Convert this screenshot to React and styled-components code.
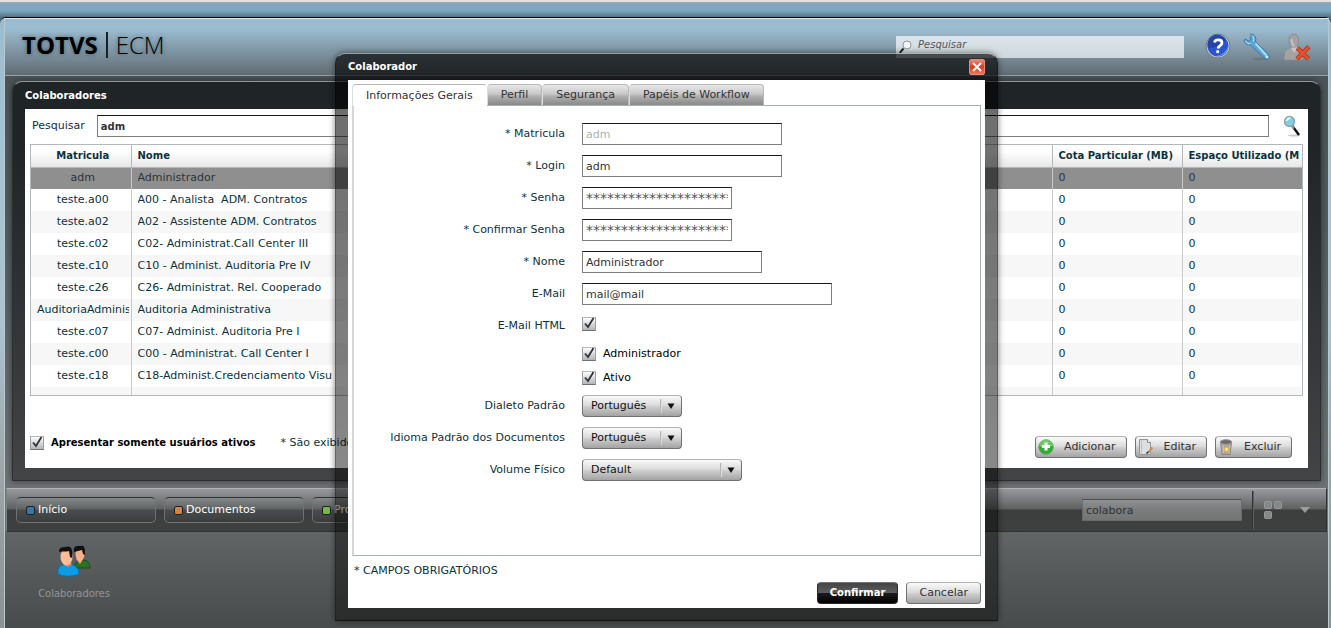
import React, { useState } from "react";
import styled, { createGlobalStyle, css } from "styled-components";

const GlobalStyle = createGlobalStyle`
    * {
        box-sizing: border-box;
    }

    body {
        margin: 0;
        background: #80a8c0;
        color: #0b333c;
        font-family: "DejaVu Sans", Verdana, sans-serif;
        font-size: 11px;
        line-height: 14px;
    }

    button,
    input,
    select {
        font: inherit;
        margin: 0;
    }
`;

const Page = styled.div`
    position: relative;
    display: flex;
    flex-direction: column;
    min-height: 100vh;
    overflow: hidden;
    border-top: 2px solid #e2e2e2;
    background: linear-gradient(#80a8c0 0, #7fa6bd 9px, #55707f 15px);
`;

const TopLine = styled.div`
    height: 1px;
    background: #a3a7a9;
`;

const Frame = styled.div`
    display: flex;
    flex: 1;
    flex-direction: column;
    margin-top: 14px;
    padding: 0 2px 0 4px;
    border-top: 1px solid #000;
    border-radius: 6px 6px 0 0;
    background: linear-gradient(#9bbcd0, #a4c3d2 20%, #abc4d0 50%, #9fa4a7 75%, #8d9193);
`;

const Inner = styled.div`
    display: flex;
    flex: 1;
    flex-direction: column;
    border: 1px solid #b9c9d0;
    border-top-color: #dbe8ee;
    border-bottom: 0;
    background: linear-gradient(#4b5558 60px, #525b5e 200px, #6e7274 470px);
`;

const Header = styled.header`
    display: flex;
    align-items: center;
    height: 57px;
    padding: 0 17px;
    border-bottom: 1px solid #98a2a8;
    background: linear-gradient(#9bbcd0 10px, #7d929f 34px, #606b72);
`;

const Logo = styled.h1`
    display: flex;
    flex: 1;
    align-items: center;
    gap: 8px;
    margin: 0;
    padding-bottom: 5px;
    color: #000;
    font-family: "Open Sans", sans-serif;
    font-size: 24px;
    font-weight: 700;
    line-height: 32px;
    text-shadow: 0 0 4px rgba(20, 40, 50, 0.5);
`;

const LogoBar = styled.span`
    width: 2px;
    height: 26px;
    background: #16222a;
`;

const LogoLight = styled.span`
    font-weight: 300;
`;

const TopSearch = styled.label`
    display: flex;
    align-items: center;
    gap: 6px;
    width: 288px;
    height: 22px;
    margin-right: 21px;
    padding: 0 3px;
    background: linear-gradient(#dbe4ea, #d0d8dc);
`;

const TopSearchInput = styled.input`
    flex: 1;
    min-width: 0;
    padding: 0 0 4px;
    border: 0;
    outline: 0;
    background: transparent;
    color: #555;
    font-size: 10px;
    font-style: italic;

    &::placeholder {
        color: #555;
        opacity: 1;
    }
`;

const IconRow = styled.div`
    display: flex;
    gap: 12px;
`;

const IconButton = styled.button`
    display: flex;
    padding: 0;
    border: 0;
    background: transparent;
    cursor: pointer;
`;

const Panel = styled.section`
    margin: 5px 7px 0;
    padding: 0 12px 12px;
    border: 1px solid #2c2f31;
    border-top-color: #8f979a;
    border-radius: 10px 10px 0 0;
    background: linear-gradient(#1f2427 60px, #434445);
    box-shadow: 0 0 6px rgba(0, 0, 0, 0.5);
`;

const PanelTitle = styled.h2`
    margin: 0;
    color: #fff;
    font-size: 10px;
    font-weight: 700;
    line-height: 27px;
`;

const PanelBody = styled.div`
    padding: 6px 5px 10px;
    background: #fff;
`;

const SearchRow = styled.div`
    display: flex;
    align-items: center;
    gap: 12px;
    margin-bottom: 7px;
    padding: 0 2px;
`;

const TextField = styled.input`
    width: ${(props) => (props.$width ? `${props.$width}px` : "auto")};
    height: 22px;
    padding: 0 3px;
    border: 1px solid #7d7f80;
    border-top-color: #16191b;
    border-radius: 0;
    outline: 0;
    background: #fff;
    color: #333;

    &:disabled {
        color: #aab3b3;
    }

    ${(props) =>
        props.$grow &&
        css`
            flex: 1;
            margin-right: 2px;
            font-size: 10px;
            font-weight: 700;
        `}

    ${(props) =>
        props.$masked &&
        css`
            color: #555;
            font-size: 14px;
        `}
`;

const Grid = styled.div`
    height: 252px;
    overflow: hidden;
    border: 1px solid #b3b8ba;
`;

const Table = styled.table`
    width: 100%;
    border-collapse: collapse;
    table-layout: fixed;
`;

const Col = styled.col`
    width: ${(props) => (props.$width ? `${props.$width}px` : "auto")};
`;

const HeadCell = styled.th`
    height: 22px;
    padding: 0 2px 0 6px;
    border-right: 1px solid #b3b8ba;
    border-bottom: 1px solid #b3b8ba;
    background: linear-gradient(#fff 30%, #e6e6e6);
    font-size: 10px;
    text-align: ${(props) => (props.$center ? "center" : "left")};

    &:last-child {
        border-right: 0;
    }
`;

const Row = styled.tr`
    height: 22px;
    background: ${(props) => (props.$selected ? "#8f8f8f" : "#fff")};
    color: ${(props) => (props.$selected ? "#2b333c" : "#0b333c")};

    &:nth-child(odd) {
        background: ${(props) => (props.$selected ? "#8f8f8f" : "#f7f7f7")};
    }
`;

const Cell = styled.td`
    padding: 0 2px 0 6px;
    border-right: 1px solid #c8cbcc;
    text-align: ${(props) => (props.$center ? "center" : "left")};

    &:last-child {
        border-right: 0;
    }
`;

const CellText = styled.div`
    overflow: hidden;
    white-space: pre;
`;

const PanelFooter = styled.div`
    display: flex;
    align-items: flex-start;
    gap: 25px;
    margin-top: 40px;
    padding-right: 11px;
`;

const Note = styled.span`
    flex: 1;
`;

const CheckLabel = styled.label`
    display: flex;
    align-items: center;
    gap: 7px;
    color: #000;
    font-size: ${(props) => (props.$strong ? "10px" : "11px")};
    font-weight: ${(props) => (props.$strong ? 700 : 400)};
`;

const CheckWrap = styled.span`
    position: relative;
    display: flex;
    width: 14px;
    height: 14px;

    svg {
        position: absolute;
        inset: 0;
        pointer-events: none;
    }
`;

const CheckInput = styled.input`
    width: 14px;
    height: 14px;
    appearance: none;
    border: 1px solid #9da0a2;
    border-top-color: #b7babb;
    border-bottom-color: #6f7172;
    background: linear-gradient(#fdfdfd, #d9d9d9 50%, #b5b5b5);
`;

const ButtonGroup = styled.div`
    display: flex;
    justify-content: flex-end;
    gap: 8px;
`;

const buttonFace = css`
    border: 1px solid #6f7172;
    border-top-color: #b0b3b4;
    border-radius: 4px;
    background: linear-gradient(#fafafa, #dadada 48%, #cfcfcf 52%, #a3a3a3);
`;

const Button = styled.button`
    display: flex;
    align-items: center;
    gap: 10px;
    height: 22px;
    padding: 0 ${(props) => (props.$icon ? "10px 0 2px" : "12px")};
    color: #333;
    cursor: pointer;
    ${buttonFace}

    ${(props) =>
        props.$primary &&
        css`
            border-color: #2a2a2a;
            border-top-color: #777;
            background: linear-gradient(#444, #5c5c5c 48%, #1c1c1c 52%, #000);
            color: #fff;
            font-size: 10px;
            font-weight: 700;
        `}
`;

const Taskbar = styled.nav`
    display: flex;
    align-items: center;
    gap: 8px;
    height: 44px;
    margin: 7px 1px 0;
    padding: 0 16px 0 9px;
    border: 1px solid #2e3031;
    border-top-color: #b0b3b5;
    border-left-color: #7d8082;
    background: linear-gradient(#97999c, #5e6060 20px, #3c3e3d 21px, #3f4141);
`;

const TaskButton = styled.button`
    display: flex;
    align-items: center;
    gap: 3px;
    width: 140px;
    height: 26px;
    padding: 0 9px;
    border: 1px solid #707374;
    border-top-color: #303333;
    border-radius: 5px;
    background: linear-gradient(#858888, #606363 46%, #4a4d4d 50%, #3b3e3e);
    color: #fff;
    cursor: pointer;
`;

const Marker = styled.span`
    width: 9px;
    height: 9px;
    border: 1px solid #1d1f20;
    border-radius: 2px;
    background: ${(props) => props.$color};
`;

const TaskTools = styled.div`
    display: flex;
    align-items: center;
    gap: 10px;
    height: 100%;
    margin-left: auto;
`;

const TaskSearch = styled.input`
    width: 160px;
    height: 22px;
    padding: 0 3px;
    border: 1px solid #686a6b;
    border-top-color: #4d4f50;
    border-radius: 0;
    outline: 0;
    background: linear-gradient(#8f9192, #7b7d7e 45%, #747675);
    color: #303434;
`;

const Divider = styled.span`
    width: 2px;
    height: 38px;
    border-left: 1px solid #313333;
    border-right: 1px solid #5c5e5f;
`;

const MenuButton = styled(IconButton)`
    padding-left: 8px;
`;

const Desktop = styled.main`
    flex: 1;
    padding: 13px 22px;
    background: linear-gradient(#616565, #484b4b);
`;

const Shortcut = styled.a`
    display: flex;
    flex-direction: column;
    align-items: center;
    gap: 10px;
    width: 94px;
    color: #929595;
    font-family: "DejaVu Sans Condensed", "DejaVu Sans", sans-serif;
    text-decoration: none;
`;

const Overlay = styled.div`
    position: absolute;
    inset: 51px 0 0;
    display: flex;
    align-items: flex-start;
    justify-content: center;
    padding-left: 2px;
`;

const Dialog = styled.section`
    width: 663px;
    padding: 0 12px 12px;
    border: 1px solid rgba(0, 0, 0, 0.25);
    border-top-color: rgba(200, 210, 215, 0.6);
    border-radius: 10px 10px 0 0;
    background: linear-gradient(rgba(0, 0, 0, 0.66) 20px, rgba(0, 0, 0, 0.57) 60px, rgba(0, 0, 0, 0.42));
    box-shadow: 0 0 6px rgba(0, 0, 0, 0.5);
`;

const DialogHeader = styled.header`
    display: flex;
    align-items: center;
    justify-content: space-between;
    height: 26px;
`;

const DialogTitle = styled(PanelTitle)`
    line-height: 26px;
`;

const CloseButton = styled.button`
    display: flex;
    align-items: center;
    justify-content: center;
    width: 16px;
    height: 16px;
    padding: 0;
    border: 1px solid #e58b7b;
    border-radius: 2px;
    background: linear-gradient(#e58a78, #de3a1e 50%, #e9775f);
    cursor: pointer;
`;

const DialogBody = styled.div`
    padding: 4px;
    background: #fff;
`;

const Tabs = styled.div`
    display: flex;
    align-items: flex-start;
`;

const Tab = styled.button`
    height: 21px;
    padding: 0 13px 1px;
    border: 1px solid #b5b9ba;
    border-bottom: 0;
    border-left-color: #dcdfdf;
    border-radius: 4px 4px 0 0;
    background: linear-gradient(#e8e8e8, #c8c8c8 45%, #b0b0b0 55%, #898989);
    color: #333;
    cursor: pointer;

    ${(props) =>
        props.$active &&
        css`
            z-index: 1;
            height: 22px;
            margin-bottom: -1px;
            padding: 1px 13px 0;
            border-right-color: #fff;
            background: #fff;
        `}
`;

const TabPanel = styled.div`
    min-height: 451px;
    padding: 17px 15px;
    border: 1px solid #a9b2b0;
    border-left: 2px solid #d3d8d7;
`;

const Form = styled.form`
    display: grid;
    grid-template-columns: 196px 1fr;
    column-gap: 17px;
    row-gap: 10px;
`;

const FieldLabel = styled.label`
    text-align: right;
    line-height: 21px;
`;

const CheckCell = styled.div`
    display: flex;
    align-items: flex-start;
    height: 22px;
    padding-top: 2px;
`;

const CheckStack = styled.div`
    display: flex;
    flex-direction: column;
    grid-column: 2;
    align-items: flex-start;
    gap: 10px;
`;

const SelectWrap = styled.div`
    position: relative;
    width: ${(props) => props.$width}px;
    height: 22px;

    svg {
        position: absolute;
        top: 3px;
        right: 6px;
        pointer-events: none;
    }
`;

const SelectBox = styled.select`
    display: block;
    width: 100%;
    height: 22px;
    padding: 0 24px 1px 8px;
    appearance: none;
    color: #111;
    ${buttonFace}
`;

const Required = styled.p`
    margin: 8px 0 4px 2px;
`;

const Magnifier = () => (
    <svg width="13" height="14" viewBox="0 0 13 14" aria-hidden="true">
        <path d="M4.500 8.500L.8 12.800" stroke="#222" strokeWidth="2" />
        <circle cx="8" cy="5" r="4" fill="#f4f7f9" stroke="#8f979b" />
    </svg>
);

const BlueMagnifier = () => (
    <svg width="18" height="22" viewBox="0 0 18 22" aria-hidden="true">
        <ellipse cx="11" cy="20.500" rx="6" ry="1" fill="#ccc" />
        <path d="M9 10.500L16 20" stroke="#111" strokeWidth="2.500" />
        <path d="M9 10.500l2 3" stroke="#999" strokeWidth="2" />
        <circle cx="6.500" cy="6.500" r="5" fill="#83cfe2" stroke="#8ea5ae" strokeWidth="1.500" />
        <path d="M3.500 6a3 3 0 0 1 4-2.500" stroke="#d9f6fc" strokeWidth="2" fill="none" />
    </svg>
);

const HelpIcon = () => (
    <svg width="26" height="26" viewBox="0 0 26 26" aria-hidden="true">
        <circle cx="13" cy="13" r="12" fill="#c3cbd6" stroke="#6f7883" />
        <circle cx="13" cy="13" r="10.500" fill="#2a55cf" />
        <path d="M3 15A10 10 0 0 1 21 6.500c-2 5-9 8-18 8.500z" fill="#2546a8" />
        <path d="M11 23c6-1 11-5 12.300-11A10.500 10.500 0 0 1 11 23z" fill="#5d92ee" />
        <path
            d="M9.500 9.500c.5-3.500 7.500-3.500 7.500.3 0 2.700-3.500 2.700-4 5.700"
            fill="none"
            stroke="#fff"
            strokeWidth="2.800"
        />
        <circle cx="12.700" cy="18.700" r="1.600" fill="#fff" />
    </svg>
);

const WrenchIcon = () => (
    <svg width="28" height="28" viewBox="0 0 28 28" aria-hidden="true">
        <ellipse cx="17" cy="26" rx="8" ry="1.200" fill="#596269" opacity=".4" />
        <path
            d="M7.500 1l.8 2-1 1.500.4 2.500-2.500 1-1.700-1.600-2.200.1c-.5 3.500 2.500 6 6 5.500L22 25.500c2.500 2 5.500-.5 4-3.500L12.500 8.500C13.500 4.500 11.500.8 7.500 1z"
            fill="#5aa5d8"
            stroke="#3f7096"
            strokeWidth=".8"
        />
        <path d="M9 2.500c2 1.500 2 4 1.500 6M2.500 8c1 2.500 3 3 5 2.500" stroke="#c9ebfb" fill="none" />
        <path d="M12.500 10.500l11 12" stroke="#a8dcf7" strokeWidth="2" />
        <circle cx="24" cy="24" r="1.300" fill="#d7eefa" />
    </svg>
);

const UserOffIcon = () => (
    <svg width="28" height="28" viewBox="0 0 28 28" aria-hidden="true">
        <path
            d="M1 27c0-3 .5-8 1.500-9.500 1.500-1.500 4-2 5.500-3.500C6 11 5.500 7 6.500 4 8 .5 13.500.5 15 3.500c1 3.500.5 7-1 10 1.500 2 4 2.500 5 4.500 1 2 1 6 1 9z"
            fill="#a5a3a2"
            stroke="#85858a"
            strokeWidth=".8"
        />
        <path d="M8 15l3.500 5 2.500-5.500" fill="#c9c7c5" />
        <path d="M8.500 6c0 3 .5 5 2.500 7" stroke="#c4c2c0" strokeWidth="2" fill="none" />
        <path d="M14.500 15l11 11M26 13.500L14 26" stroke="#a8301a" strokeWidth="4.500" />
        <path d="M14.500 15l11 11M26 13.500L14 26" stroke="#ea4e2a" strokeWidth="3" />
    </svg>
);

const AddIcon = () => (
    <svg width="16" height="16" viewBox="0 0 16 16" aria-hidden="true">
        <circle cx="8" cy="8" r="7.200" fill="#2fae33" stroke="#5f9c60" />
        <path d="M1.500 7a6.500 6.500 0 0 1 13 0c-5 2-8 2-13 0z" fill="#8bd681" opacity=".7" />
        <path d="M8 3.500v8M4 7.500h8" stroke="#fff" strokeWidth="3" />
    </svg>
);

const EditIcon = () => (
    <svg width="16" height="16" viewBox="0 0 16 16" aria-hidden="true">
        <path d="M1.500.5h8l3 3v12h-11z" fill="#dcdedf" stroke="#929698" />
        <path d="M3.500 1v14" stroke="#c0c2c3" />
        <path d="M9.500.5v3h3" fill="#fff" stroke="#8b8e90" />
        <path d="M14.500 8.500l-4 4.500" stroke="#d08f45" strokeWidth="2" />
        <path d="M10.500 12.800L8.500 14.500" stroke="#222" strokeWidth="1.500" />
    </svg>
);

const TrashIcon = () => (
    <svg width="16" height="16" viewBox="0 0 16 16" aria-hidden="true">
        <path d="M2.500 3h11l-1.500 12.500H4z" fill="#aaa7a3" stroke="#8a8784" />
        <path d="M5 6l.5 8M11.500 6l-.7 8" stroke="#c9c6c2" />
        <ellipse cx="8" cy="3" rx="5.700" ry="2.300" fill="#6d6b69" stroke="#999" />
        <circle cx="8.500" cy="10.300" r="2" fill="#fff3b0" stroke="#e9ae4c" strokeWidth="1.300" />
    </svg>
);

const PeopleIcon = () => (
    <svg width="34" height="32" viewBox="0 0 34 32" aria-hidden="true">
        <path d="M17 23c1-6 4-8 8-8 5 0 8 3 8 8z" fill="#267522" stroke="#174d19" />
        <path d="M19 14l4 5 3-5" fill="#f4a579" />
        <ellipse cx="23" cy="9" rx="4.500" ry="7" fill="#f7b18a" />
        <path d="M17 7c-1-7 3-6 7-6 4-1 4 4 4 9l-2-1-1-4z" fill="#111" />
        <path d="M1 29c-1-6 2-9 8-10 8 0 13 3 13 10-6 3-15 3-21 0z" fill="#0c9be4" stroke="#0871ae" />
        <path d="M7 18c2 5 6 5 8 0z" fill="#e98250" />
        <ellipse cx="9.500" cy="12" rx="6" ry="8.500" fill="#fbbd98" />
        <path d="M2 7C2 2 5 2.500 8 2c6-2 8 1 7 11l-2-1-1-6c-3 1-7 0-10 1z" fill="#111" />
    </svg>
);

const LayoutIcon = () => (
    <svg width="18" height="18" viewBox="0 0 18 18" aria-hidden="true">
        <g fill="#858888" stroke="#969999">
            <rect x=".5" y=".5" width="7" height="7" rx="1" />
            <rect x="10.500" y=".5" width="7" height="7" rx="1" />
            <rect x=".5" y="10.500" width="7" height="7" rx="1" />
        </g>
    </svg>
);

const ArrowIcon = () => (
    <svg width="10" height="6" viewBox="0 0 10 6" aria-hidden="true">
        <path d="M0 0h10L5 6z" fill="#9a9d9d" />
    </svg>
);

const SelectArrow = () => (
    <svg width="16" height="16" viewBox="0 0 16 16" aria-hidden="true">
        <path d="M.5 1v14" stroke="#b4b4b4" />
        <path d="M1.500 1v14" stroke="#e0e0e0" />
        <path d="M7.500 5.500h7L11 11z" fill="#111" />
    </svg>
);

const Check = ({ id, label, strong, defaultChecked = true }) => (
    <CheckLabel $strong={strong}>
        <CheckWrap>
            <CheckInput id={id} type="checkbox" defaultChecked={defaultChecked} />
            <svg width="14" height="14" viewBox="0 0 14 14" aria-hidden="true">
                <path d="M3 6.500l3 3.500 5.500-9" fill="none" stroke="#2b333c" strokeWidth="1.800" />
            </svg>
        </CheckWrap>
        {label}
    </CheckLabel>
);

const Select = ({ id, width, options }) => (
    <SelectWrap $width={width}>
        <SelectBox id={id}>
            {options.map((option) => (
                <option key={option}>{option}</option>
            ))}
        </SelectBox>
        <SelectArrow />
    </SelectWrap>
);

const users = [
    { id: "adm", nome: "Administrador" },
    { id: "teste.a00", nome: "A00 - Analista  ADM. Contratos" },
    { id: "teste.a02", nome: "A02 - Assistente ADM. Contratos" },
    { id: "teste.c02", nome: "C02- Administrat.Call Center III" },
    { id: "teste.c10", nome: "C10 - Administ. Auditoria Pre IV" },
    { id: "teste.c26", nome: "C26- Administrat. Rel. Cooperado" },
    { id: "AuditoriaAdminist", nome: "Auditoria Administrativa" },
    { id: "teste.c07", nome: "C07- Administ. Auditoria Pre I" },
    { id: "teste.c00", nome: "C00 - Administrat. Call Center I" },
    { id: "teste.c18", nome: "C18-Administ.Credenciamento Visu" },
];

const fields = [
    { id: "matricula", label: "* Matricula", value: "adm", width: 200, disabled: true },
    { id: "login", label: "* Login", value: "adm", width: 200 },
    { id: "senha", label: "* Senha", value: "*".repeat(24), width: 150, masked: true },
    { id: "confirmar", label: "* Confirmar Senha", value: "*".repeat(24), width: 150, masked: true },
    { id: "nome", label: "* Nome", value: "Administrador", width: 180 },
    { id: "email", label: "E-Mail", value: "mail@mail", width: 250 },
];

const tabs = ["Informações Gerais", "Perfil", "Segurança", "Papéis de Workflow"];

const tasks = [
    { label: "Início", color: "#3878a8" },
    { label: "Documentos", color: "#cf8546" },
    { label: "Processos", color: "#77b843" },
];

function UsersTable() {
    return (
        <Grid>
            <Table>
                <colgroup>
                    <Col $width={100} />
                    <Col />
                    <Col $width={130} />
                    <Col $width={120} />
                </colgroup>
                <thead>
                    <tr>
                        <HeadCell $center>Matricula</HeadCell>
                        <HeadCell>Nome</HeadCell>
                        <HeadCell>
                            <CellText>Cota Particular (MB)</CellText>
                        </HeadCell>
                        <HeadCell>
                            <CellText>Espaço Utilizado (MB)</CellText>
                        </HeadCell>
                    </tr>
                </thead>
                <tbody>
                    {users.map((user, i) => (
                        <Row key={user.id} $selected={i === 0}>
                            <Cell $center>
                                <CellText>{user.id}</CellText>
                            </Cell>
                            <Cell>
                                <CellText>{user.nome}</CellText>
                            </Cell>
                            <Cell>0</Cell>
                            <Cell>0</Cell>
                        </Row>
                    ))}
                    <Row>
                        <Cell />
                        <Cell />
                        <Cell />
                        <Cell />
                    </Row>
                </tbody>
            </Table>
        </Grid>
    );
}

function ColaboradorDialog() {
    const [active, setActive] = useState(0);

    return (
        <Overlay>
            <Dialog role="dialog" aria-label="Colaborador">
                <DialogHeader>
                    <DialogTitle>Colaborador</DialogTitle>
                    <CloseButton type="button" aria-label="Fechar">
                        <svg width="10" height="10" viewBox="0 0 10 10" aria-hidden="true">
                            <path d="M1 1l8 8M9 1L1 9" stroke="#fff" strokeWidth="2" />
                        </svg>
                    </CloseButton>
                </DialogHeader>
                <DialogBody>
                    <Tabs role="tablist">
                        {tabs.map((tab, i) => (
                            <Tab
                                key={tab}
                                type="button"
                                role="tab"
                                aria-selected={active === i}
                                $active={active === i}
                                onClick={() => setActive(i)}
                            >
                                {tab}
                            </Tab>
                        ))}
                    </Tabs>
                    <TabPanel role="tabpanel">
                        <Form>
                            {fields.map((field) => (
                                <React.Fragment key={field.id}>
                                    <FieldLabel htmlFor={field.id}>{field.label}</FieldLabel>
                                    <div>
                                        <TextField
                                            id={field.id}
                                            type="text"
                                            defaultValue={field.value}
                                            disabled={field.disabled}
                                            $width={field.width}
                                            $masked={field.masked}
                                        />
                                    </div>
                                </React.Fragment>
                            ))}
                            <FieldLabel htmlFor="emailHtml">E-Mail HTML</FieldLabel>
                            <CheckCell>
                                <Check id="emailHtml" />
                            </CheckCell>
                            <CheckStack>
                                <Check id="administrador" label="Administrador" />
                                <Check id="ativo" label="Ativo" />
                            </CheckStack>
                            <FieldLabel htmlFor="dialeto">Dialeto Padrão</FieldLabel>
                            <Select id="dialeto" width={100} options={["Português"]} />
                            <FieldLabel htmlFor="idioma">Idioma Padrão dos Documentos</FieldLabel>
                            <Select id="idioma" width={100} options={["Português"]} />
                            <FieldLabel htmlFor="volume">Volume Físico</FieldLabel>
                            <Select id="volume" width={160} options={["Default"]} />
                        </Form>
                    </TabPanel>
                    <Required>* CAMPOS OBRIGATÓRIOS</Required>
                    <ButtonGroup>
                        <Button type="button" $primary>
                            Confirmar
                        </Button>
                        <Button type="button">Cancelar</Button>
                    </ButtonGroup>
                </DialogBody>
            </Dialog>
        </Overlay>
    );
}

export default function App() {
    return (
        <Page>
            <GlobalStyle />
            <TopLine />
            <Frame>
                <Inner>
                    <Header>
                        <Logo>
                            <span>TOTVS</span>
                            <LogoBar />
                            <LogoLight>ECM</LogoLight>
                        </Logo>
                        <TopSearch>
                            <Magnifier />
                            <TopSearchInput
                                type="text"
                                placeholder="Pesquisar"
                                aria-label="Pesquisar"
                            />
                        </TopSearch>
                        <IconRow>
                            <IconButton type="button" aria-label="Ajuda">
                                <HelpIcon />
                            </IconButton>
                            <IconButton type="button" aria-label="Configurações">
                                <WrenchIcon />
                            </IconButton>
                            <IconButton type="button" aria-label="Sair">
                                <UserOffIcon />
                            </IconButton>
                        </IconRow>
                    </Header>

                    <Panel>
                        <PanelTitle>Colaboradores</PanelTitle>
                        <PanelBody>
                            <SearchRow>
                                <label htmlFor="pesquisar">Pesquisar</label>
                                <TextField id="pesquisar" type="text" defaultValue="adm" $grow />
                                <IconButton type="button" aria-label="Buscar">
                                    <BlueMagnifier />
                                </IconButton>
                            </SearchRow>
                            <UsersTable />
                            <PanelFooter>
                                <Check id="somenteAtivos" label="Apresentar somente usuários ativos" strong />
                                <Note>* São exibidos</Note>
                                <ButtonGroup>
                                    <Button type="button" $icon>
                                        <AddIcon />
                                        Adicionar
                                    </Button>
                                    <Button type="button" $icon>
                                        <EditIcon />
                                        Editar
                                    </Button>
                                    <Button type="button" $icon>
                                        <TrashIcon />
                                        Excluir
                                    </Button>
                                </ButtonGroup>
                            </PanelFooter>
                        </PanelBody>
                    </Panel>

                    <Taskbar>
                        {tasks.map((task) => (
                            <TaskButton key={task.label} type="button">
                                <Marker $color={task.color} />
                                {task.label}
                            </TaskButton>
                        ))}
                        <TaskTools>
                            <TaskSearch type="text" defaultValue="colabora" aria-label="Filtrar" />
                            <Divider />
                            <IconButton type="button" aria-label="Organizar">
                                <LayoutIcon />
                            </IconButton>
                            <MenuButton type="button" aria-label="Mais opções">
                                <ArrowIcon />
                            </MenuButton>
                        </TaskTools>
                    </Taskbar>

                    <Desktop>
                        <Shortcut href="#colaboradores">
                            <PeopleIcon />
                            Colaboradores
                        </Shortcut>
                    </Desktop>
                </Inner>
            </Frame>
            <ColaboradorDialog />
        </Page>
    );
}
